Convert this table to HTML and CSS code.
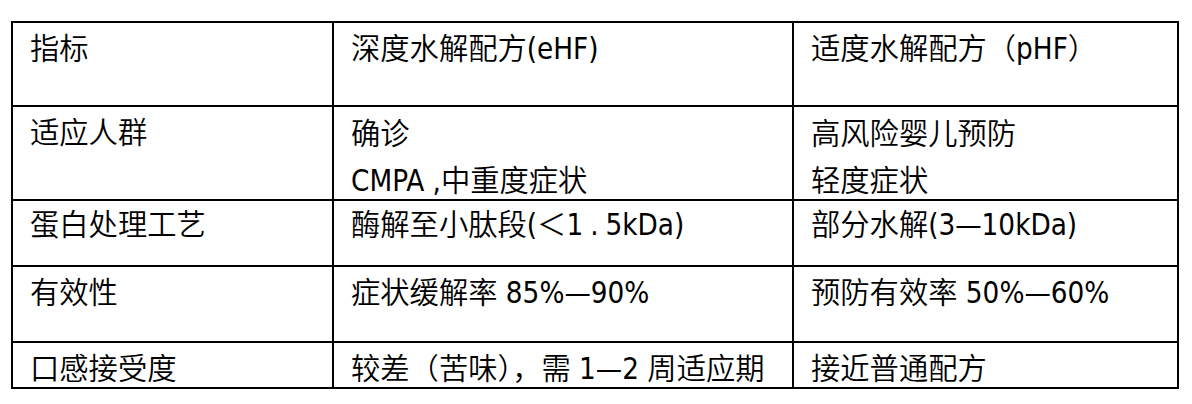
FILE: index.html
```html
<!DOCTYPE html>
<html lang="zh-CN">
<head>
<meta charset="utf-8">
<title>eHF vs pHF</title>
<link rel="stylesheet" href="styles.css">
</head>
<body>
<div class="table">
  <div class="cell">指标</div>
  <div class="cell">深度水解配方(eHF)</div>
  <div class="cell">适度水解配方（pHF）</div>

  <div class="cell">适应人群</div>
  <div class="cell lines"><span>确诊</span><span>CMPA ,中重度症状</span></div>
  <div class="cell lines"><span>高风险婴儿预防</span><span>轻度症状</span></div>

  <div class="cell short">蛋白处理工艺</div>
  <div class="cell short">酶解至小肽段(＜<span class="sp">1.</span>5kDa)</div>
  <div class="cell short">部分水解(3—10kDa)</div>

  <div class="cell">有效性</div>
  <div class="cell">症状缓解率 85%—90%</div>
  <div class="cell">预防有效率 50%—60%</div>

  <div class="cell">口感接受度</div>
  <div class="cell">较差（苦味），需 1—2 周适应期</div>
  <div class="cell">接近普通配方</div>
</div>
</body>
</html>
```
FILE: styles.css
```css
html, body {
  margin: 0;
  padding: 0;
  background: #ffffff;
}

body {
  padding: 21px 0 0 11px;
  font-family: "DejaVu Sans Condensed", "Noto Sans CJK SC", sans-serif;
  font-size: 29.3px;
  font-weight: 350;
  color: #000000;
}

.table {
  display: grid;
  width: 1168px;
  box-sizing: border-box;
  grid-template-columns: 321px 460px 385px;
  grid-template-rows: 84px 94px 66px 76px 46px;
  border-top: 2px solid #000;
  border-left: 2px solid #000;
}

.cell {
  box-sizing: border-box;
  border-right: 2px solid #000;
  border-bottom: 2px solid #000;
  padding: 11px 0 0 17px;
  line-height: 30px;
  white-space: nowrap;
}

.short {
  padding-top: 9px;
}

.lines {
  display: flex;
  flex-direction: column;
  gap: 17px;
  padding-top: 12px;
}

.sp {
  letter-spacing: 7px;
}
```
